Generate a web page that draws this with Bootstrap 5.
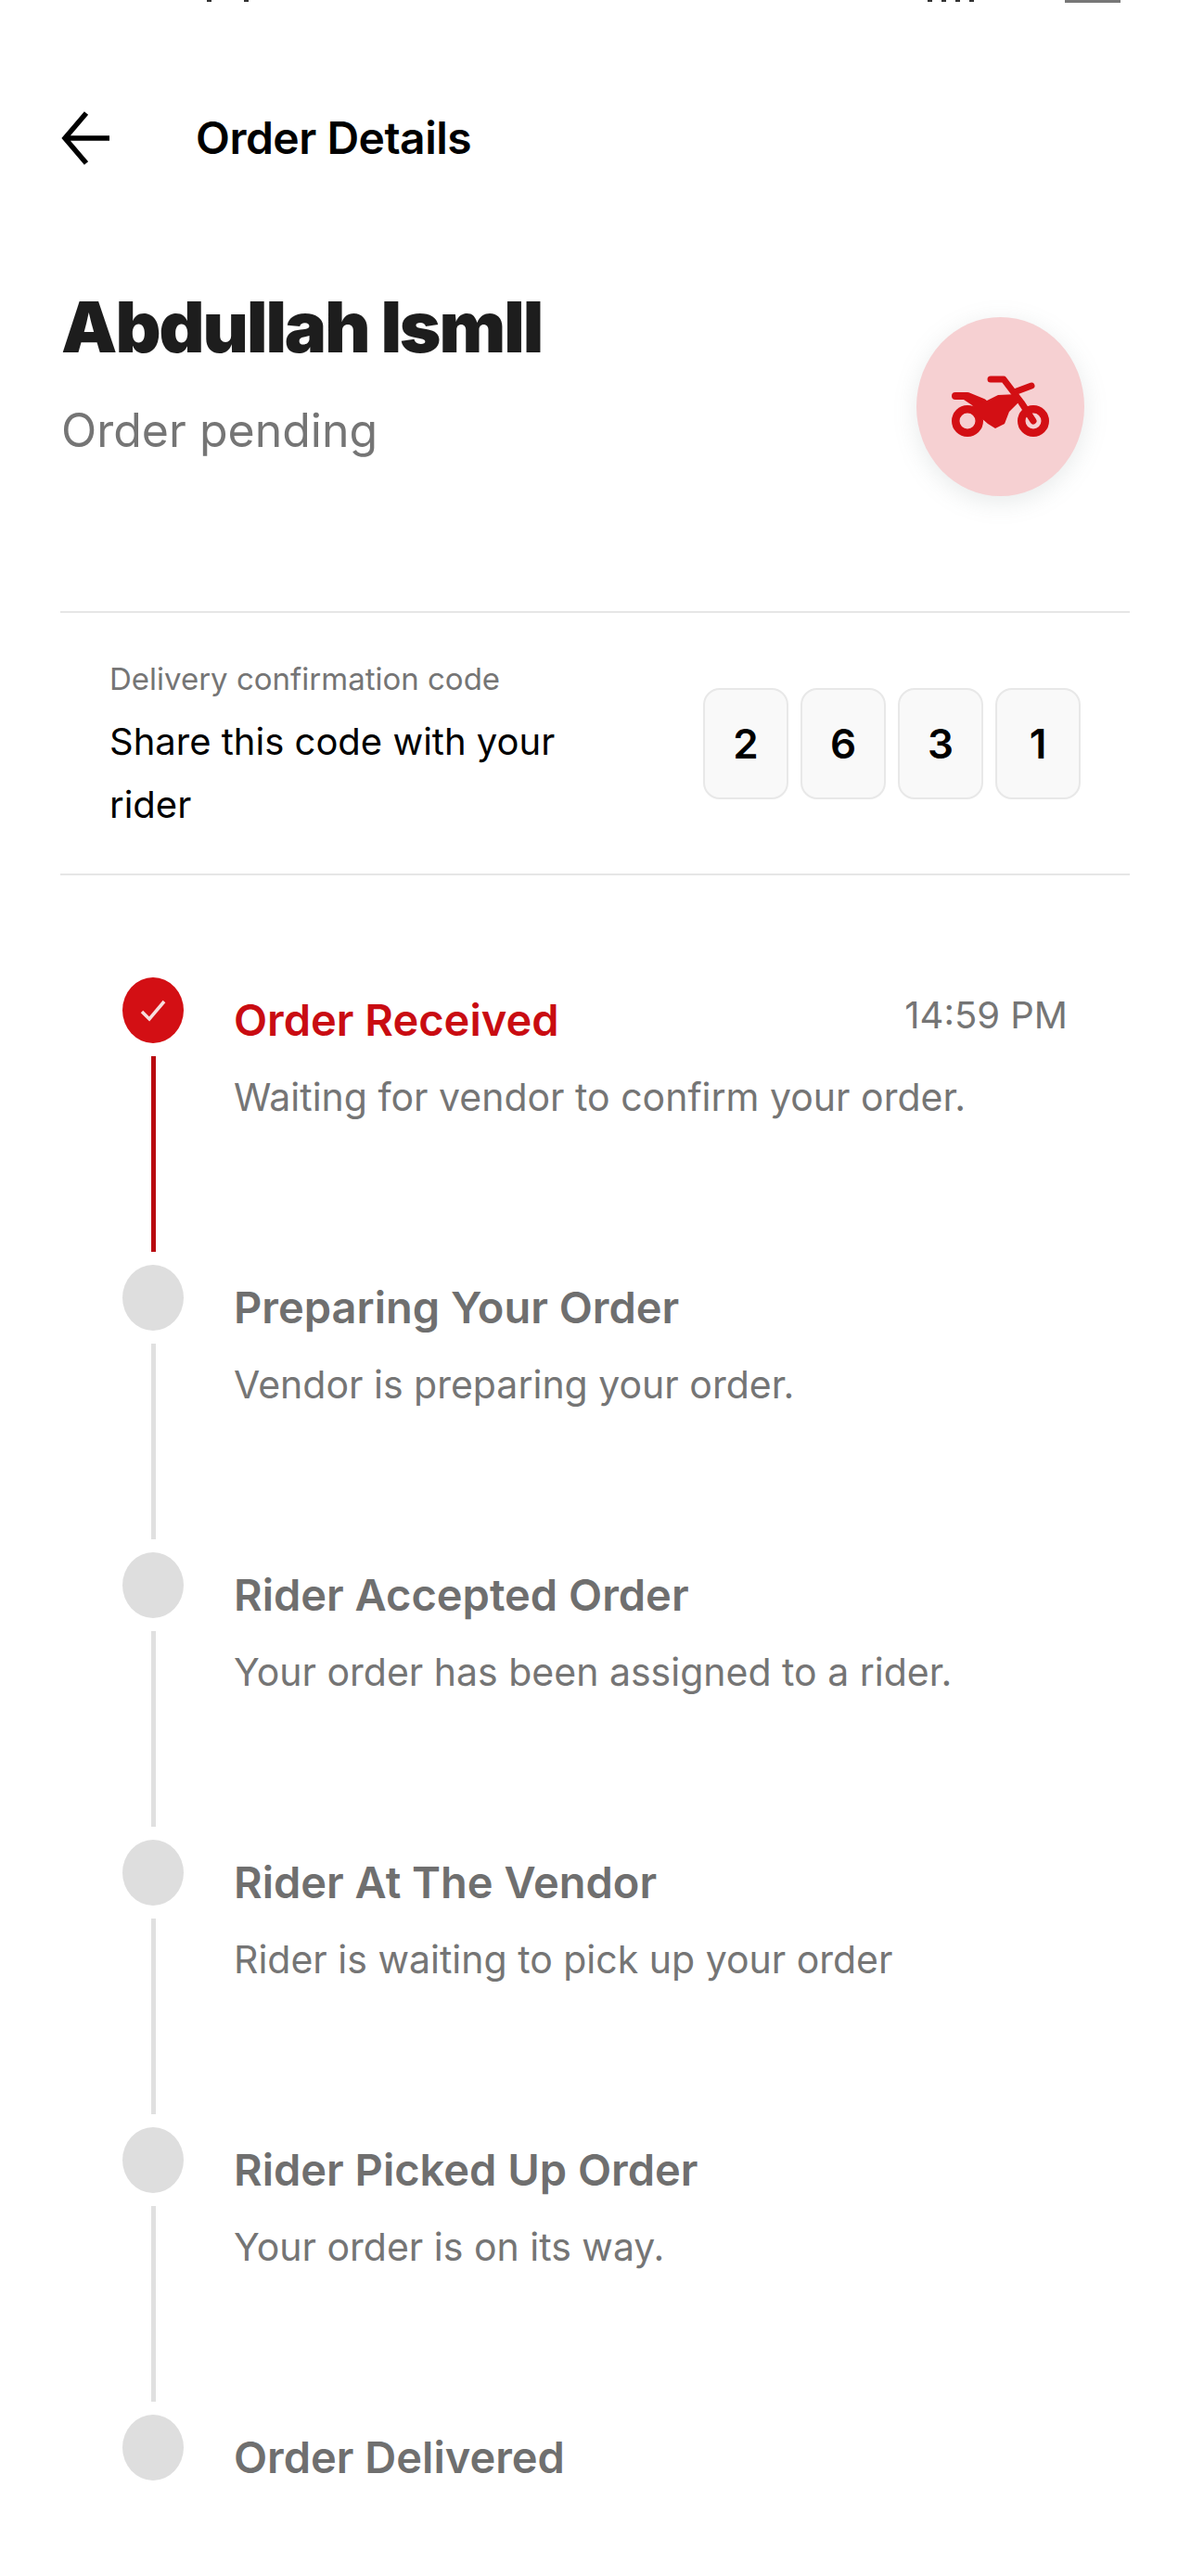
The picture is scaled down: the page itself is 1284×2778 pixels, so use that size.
<!DOCTYPE html>
<html lang="en"><head><meta charset="utf-8">
<link rel="stylesheet" href="https://cdn.jsdelivr.net/npm/bootstrap@5.3.0/dist/css/bootstrap.min.css">
<style>
html,body{height:2778px;overflow:hidden;background:#fff}
body{font-family:"Inter","Liberation Sans",sans-serif;color:#000}
.status-strip{height:3px;padding:0 76px 0 73px;overflow:hidden}
.status-time{font-size:40px;line-height:44px;font-weight:700;margin-top:-42px;width:115px}
.status-fleck{width:5px;height:2px;background:#333}
.status-cell{width:60px;height:3px;background:#777}
.top-bar{height:110px;margin-top:91px;padding-left:66px}
.top-bar svg{width:54px;height:60px;margin-right:91px}
.top-title{font-size:48px;font-weight:600;margin:0;letter-spacing:-.5px}
.head-row{padding:0 66px;margin-top:106px;height:349px}
.person{font-size:76px;font-weight:900;line-height:84px;color:#1d1d1d;letter-spacing:-2px;margin:0}
.state{font-size:50px;color:#757575;line-height:60px;margin-top:40px}
.ride-badge{width:181px;height:193px;background:#f6d0d2;box-shadow:0 6px 26px rgba(120,140,140,.18);margin:32px 49px 0 0}
.ride-badge svg{width:106px;height:67px}
.code-band{margin:0 66px 0 65px;height:285px;border-top:2px solid #e6e6e6;border-bottom:2px solid #e6e6e6;padding:0 53px}
.code-note{width:520px;padding-top:53px}
.code-lab{font-size:33px;color:#757575;line-height:36px;margin-bottom:16px}
.code-msg{font-size:40px;line-height:68px;color:#000}
.code-digit{width:92px;height:120px;background:#f9f9f9;border:2px solid #e8e8e8;border-radius:18px;font-size:44px;font-weight:600}
.track{padding:110px 133px 0 132px}
.stage{height:310px}
.stage:last-child{height:auto}
.rail{width:66px;margin-right:54px}
.dot{width:66px;height:71px;background:#dedede;flex:none}
.dot-on{background:#d30f14}
.dot-on svg{width:30px;height:26px}
.rail-line{width:5px;height:211px;background:#e0e0e0;margin-top:14px}
.rail-on{background:#b8090f}
.stage-body{padding-top:24px}
.stage-name{font-size:47px;font-weight:600;color:#6f6f6f;line-height:44px;margin:0}
.name-on{color:#c90c12}
.stage-text{font-size:41px;color:#757575;line-height:44px;margin-top:39px;white-space:nowrap}
.stage-time{font-size:40px;color:#757575;line-height:44px;margin-top:-5px}
</style></head><body>
<div class="status-strip d-flex justify-content-between">
  <div class="d-flex" style="gap:35px"><div class="status-time">09:37</div><div class="status-fleck"></div><div class="status-fleck"></div></div>
  <div class="d-flex align-items-start"><div class="d-flex" style="gap:10px;margin-right:98px"><div class="status-fleck"></div><div class="status-fleck"></div><div class="status-fleck"></div><div class="status-fleck"></div></div><div class="status-cell"></div></div>
</div>
<div class="top-bar d-flex align-items-center">
  <svg viewBox="0 0 54 60" fill="none" stroke="#000" stroke-width="5.5"><path d="M52 30H5M27 3 4 30l23 27"/></svg>
  <h1 class="top-title">Order Details</h1>
</div>
<div class="head-row d-flex justify-content-between align-items-start">
  <div>
    <h2 class="person">Abdullah Ismll</h2>
    <div class="state">Order pending</div>
  </div>
  <div class="ride-badge rounded-circle d-flex align-items-center justify-content-center">
    <svg viewBox="0 0 106 67" fill="none"><g stroke="#d30f14" stroke-linecap="round" stroke-linejoin="round"><circle cx="17" cy="49" r="12.75" stroke-width="8.5"/><circle cx="88" cy="49" r="12.75" stroke-width="8.5"/><path d="M42 4h14l19 25 13 20" stroke-width="7"/><path d="M70 17l16-6" stroke-width="7"/><path d="M4 22h13l17 7" stroke-width="8"/></g><path fill="#d30f14" d="M10 24l24 5 16-8 21-1 3 7-12 12-5 13-10 5-8-5-7-6-10-14z"/></svg>
  </div>
</div>
<div class="code-band d-flex align-items-center justify-content-between">
  <div class="code-note align-self-start">
    <div class="code-lab">Delivery confirmation code</div>
    <div class="code-msg">Share this code with your rider</div>
  </div>
  <div class="d-flex" style="gap:13px">
    <div class="code-digit d-flex align-items-center justify-content-center">2</div>
    <div class="code-digit d-flex align-items-center justify-content-center">6</div>
    <div class="code-digit d-flex align-items-center justify-content-center">3</div>
    <div class="code-digit d-flex align-items-center justify-content-center">1</div>
  </div>
</div>
<div class="track">
  <div class="stage d-flex">
    <div class="rail d-flex flex-column align-items-center"><div class="dot dot-on rounded-circle d-flex align-items-center justify-content-center"><svg viewBox="0 0 30 26" fill="none" stroke="#f7dede" stroke-width="3.5"><path d="M3 14l8 8L27 3"/></svg></div><div class="rail-line rail-on"></div></div>
    <div class="stage-body flex-grow-1">
      <div class="d-flex justify-content-between"><h3 class="stage-name name-on">Order Received</h3><div class="stage-time">14:59 PM</div></div>
      <div class="stage-text">Waiting for vendor to confirm your order.</div>
    </div>
  </div>
  <div class="stage d-flex">
    <div class="rail d-flex flex-column align-items-center"><div class="dot rounded-circle"></div><div class="rail-line"></div></div>
    <div class="stage-body"><h3 class="stage-name">Preparing Your Order</h3><div class="stage-text">Vendor is preparing your order.</div></div>
  </div>
  <div class="stage d-flex">
    <div class="rail d-flex flex-column align-items-center"><div class="dot rounded-circle"></div><div class="rail-line"></div></div>
    <div class="stage-body"><h3 class="stage-name">Rider Accepted Order</h3><div class="stage-text">Your order has been assigned to a rider.</div></div>
  </div>
  <div class="stage d-flex">
    <div class="rail d-flex flex-column align-items-center"><div class="dot rounded-circle"></div><div class="rail-line"></div></div>
    <div class="stage-body"><h3 class="stage-name">Rider At The Vendor</h3><div class="stage-text">Rider is waiting to pick up your order</div></div>
  </div>
  <div class="stage d-flex">
    <div class="rail d-flex flex-column align-items-center"><div class="dot rounded-circle"></div><div class="rail-line"></div></div>
    <div class="stage-body"><h3 class="stage-name">Rider Picked Up Order</h3><div class="stage-text">Your order is on its way.</div></div>
  </div>
  <div class="stage d-flex">
    <div class="rail d-flex flex-column align-items-center"><div class="dot rounded-circle"></div></div>
    <div class="stage-body"><h3 class="stage-name">Order Delivered</h3></div>
  </div>
</div>
<script src="https://cdn.jsdelivr.net/npm/bootstrap@5.3.0/dist/js/bootstrap.bundle.min.js"></script>
</body></html>
